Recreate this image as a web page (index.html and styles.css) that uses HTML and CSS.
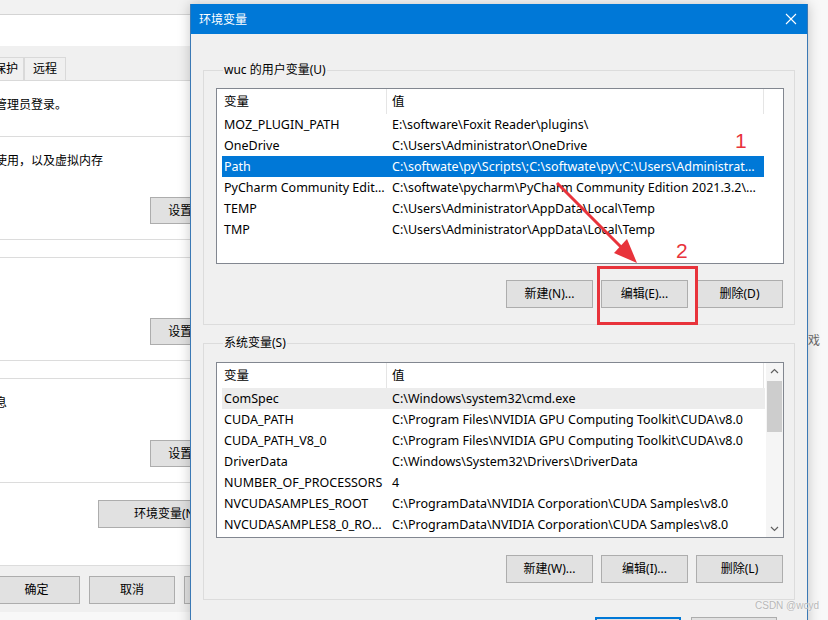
FILE: index.html
```html
<!DOCTYPE html>
<html lang="zh-CN">
<head>
<meta charset="utf-8">
<title>环境变量</title>
<link rel="stylesheet" href="styles.css">
</head>
<body>
<div class="desk">
  <div class="peek">戏</div>

  <section class="sysprop">
    <div class="sp-top"></div>
    <div class="sp-title"></div>
    <div class="sp-tabs">
      <span class="tab tab-cut">保护</span>
      <span class="tab">远程</span>
    </div>
    <div class="sp-panel">
      <p class="sp-note">管理员登录。</p>
      <div class="sp-group">
        <p class="sp-text">使用，以及虚拟内存</p>
        <div class="sp-row"><button class="btn sp-set">设置(S)...</button></div>
      </div>
      <div class="sp-group sp-group-tall">
        <div class="sp-row"><button class="btn sp-set">设置(E)...</button></div>
      </div>
      <div class="sp-group">
        <p class="sp-text">息</p>
        <div class="sp-row sp-row-low"><button class="btn sp-set">设置(T)...</button></div>
      </div>
      <div class="sp-row sp-row-env"><button class="btn sp-env">环境变量(N)...</button></div>
    </div>
    <div class="sp-foot">
      <button class="btn sp-ok">确定</button>
      <button class="btn sp-cancel">取消</button>
      <button class="btn sp-apply">应用(A)</button>
    </div>
  </section>

  <section class="dialog">
    <header class="dlg-title">
      <span class="dlg-caption">环境变量</span>
      <svg class="dlg-close" width="12" height="12" viewBox="0 0 12 12"><path d="M1 1L11 11M11 1L1 11" stroke="#fff" stroke-width="1.1" fill="none"/></svg>
    </header>
    <div class="dlg-body">
      <fieldset class="group group-user">
        <legend>wuc 的用户变量(U)</legend>
        <div class="list list-user">
          <div class="table">
            <div class="thead">
              <span class="th th-name">变量</span>
              <span class="th th-value">值</span>
            </div>
            <div class="tbody">
              <div class="tr"><span class="td">MOZ_PLUGIN_PATH</span><span class="td">E:\software\Foxit Reader\plugins\</span></div>
              <div class="tr"><span class="td">OneDrive</span><span class="td">C:\Users\Administrator\OneDrive</span></div>
              <div class="tr tr-sel"><span class="td">Path</span><span class="td">C:\softwate\py\Scripts\;C:\softwate\py\;C:\Users\Administrator\AppData\Local\Microsoft\WindowsApps;</span></div>
              <div class="tr"><span class="td">PyCharm Community Edition</span><span class="td">C:\softwate\pycharm\PyCharm Community Edition 2021.3.2\bin;</span></div>
              <div class="tr"><span class="td">TEMP</span><span class="td">C:\Users\Administrator\AppData\Local\Temp</span></div>
              <div class="tr"><span class="td">TMP</span><span class="td">C:\Users\Administrator\AppData\Local\Temp</span></div>
            </div>
          </div>
        </div>
        <div class="btn-row">
          <button class="btn">新建(N)...</button>
          <button class="btn">编辑(E)...</button>
          <button class="btn">删除(D)</button>
        </div>
      </fieldset>

      <fieldset class="group group-sys">
        <legend>系统变量(S)</legend>
        <div class="list list-sys">
          <div class="table">
            <div class="thead">
              <span class="th th-name">变量</span>
              <span class="th th-value">值</span>
            </div>
            <div class="tbody">
              <div class="tr tr-hover"><span class="td">ComSpec</span><span class="td">C:\Windows\system32\cmd.exe</span></div>
              <div class="tr"><span class="td">CUDA_PATH</span><span class="td">C:\Program Files\NVIDIA GPU Computing Toolkit\CUDA\v8.0</span></div>
              <div class="tr"><span class="td">CUDA_PATH_V8_0</span><span class="td">C:\Program Files\NVIDIA GPU Computing Toolkit\CUDA\v8.0</span></div>
              <div class="tr"><span class="td">DriverData</span><span class="td">C:\Windows\System32\Drivers\DriverData</span></div>
              <div class="tr"><span class="td">NUMBER_OF_PROCESSORS</span><span class="td">4</span></div>
              <div class="tr"><span class="td">NVCUDASAMPLES_ROOT</span><span class="td">C:\ProgramData\NVIDIA Corporation\CUDA Samples\v8.0</span></div>
              <div class="tr"><span class="td">NVCUDASAMPLES8_0_ROOT</span><span class="td">C:\ProgramData\NVIDIA Corporation\CUDA Samples\v8.0</span></div>
            </div>
          </div>
          <div class="scrollbar">
            <svg class="sb-arrow" width="17" height="17" viewBox="0 0 17 17"><path d="M5 10L8.5 6.5L12 10" stroke="#606060" stroke-width="1.2" fill="none"/></svg>
            <div class="sb-track"><div class="sb-thumb"></div></div>
            <svg class="sb-arrow" width="17" height="17" viewBox="0 0 17 17"><path d="M5 7L8.5 10.5L12 7" stroke="#606060" stroke-width="1.2" fill="none"/></svg>
          </div>
        </div>
        <div class="btn-row">
          <button class="btn">新建(W)...</button>
          <button class="btn">编辑(I)...</button>
          <button class="btn">删除(L)</button>
        </div>
      </fieldset>

      <div class="dlg-foot">
        <button class="btn btn-primary">确定</button>
        <button class="btn">取消</button>
      </div>
    </div>
  </section>

  <div class="mark mark-1">1</div>
  <div class="mark mark-2">2</div>
  <div class="mark-box"></div>
  <svg class="mark-arrow" width="828" height="620" viewBox="0 0 828 620">
    <line x1="557" y1="183" x2="625" y2="251" stroke="#e8333b" stroke-width="3"/>
    <polygon points="637,263 614,253 627,239" fill="#e8333b"/>
  </svg>
  <div class="watermark">CSDN @wcyd</div>
</div>
</body>
</html>
```

FILE: styles.css
```css
* { box-sizing: border-box; }

html, body {
  margin: 0;
  padding: 0;
  width: 828px;
  height: 620px;
  overflow: hidden;
  background: #f8f8f8;
  font-family: "Noto Sans", "Noto Sans CJK SC", sans-serif;
  font-size: 12px;
  color: #000;
}

.desk {
  position: relative;
  width: 828px;
  height: 620px;
  overflow: hidden;
}

p { margin: 0; }

.btn {
  font: inherit;
  font-size: 12px;
  color: #000;
  background: #e1e1e1;
  border: 1px solid #adadad;
  height: 28px;
  padding: 0;
  margin: 0;
  line-height: 26px;
}

/* ---------- background window (System Properties) ---------- */
.sysprop {
  position: absolute;
  left: 0;
  top: 0;
  width: 200px;
  height: 612px;
  overflow: hidden;
  background: #f0f0f0;
  display: flex;
  flex-direction: column;
}

.sp-top {
  height: 15px;
  background: #f2f2f2;
  border-bottom: 1px solid #d4d4d4;
}

.sp-title {
  height: 31px;
  background: #fff;
}

.sp-tabs {
  height: 34px;
  padding-top: 11px;
  display: flex;
  background: #f0f0f0;
}

.tab {
  height: 23px;
  line-height: 22px;
  padding: 0 8px;
  border: 1px solid #d9d9d9;
  border-bottom: none;
  background: #f0f0f0;
  white-space: nowrap;
}

.tab-cut {
  margin-left: -6px;
  padding-left: 0;
  border-left: none;
  padding-right: 5px;
}

.sp-panel {
  background: #fff;
  border-top: 1px solid #d9d9d9;
  border-bottom: 1px solid #dcdcdc;
  padding: 14px 0 37px;
}

.sp-note {
  line-height: 20px;
  margin-left: -5px;
  white-space: nowrap;
}

.sp-group {
  margin-top: 21px;
  border-top: 1px solid #dcdcdc;
  border-bottom: 1px solid #dcdcdc;
  padding: 14px 0 15px;
}

.sp-group + .sp-group { margin-top: 17px; }

.sp-group-tall { padding-top: 60px; }

.sp-text {
  line-height: 20px;
  margin-left: -5px;
  white-space: nowrap;
}

.sp-row {
  display: flex;
  margin-top: 26px;
  white-space: nowrap;
}

.sp-group-tall .sp-row { margin-top: 0; }
.sp-row-low { margin-top: 27px; }

.sp-set {
  margin-left: 150px;
  width: 84px;
  flex: none;
  height: 27px;
  line-height: 25px;
}

.sp-row-env { margin-top: 17px; }

.sp-env {
  margin-left: 98px;
  width: 130px;
  flex: none;
  height: 28px;
  text-align: left;
  padding-left: 35px;
}

.sp-foot {
  display: flex;
  gap: 9px;
  padding-top: 10px;
  white-space: nowrap;
}

.sp-ok { width: 87px; flex: none; margin-left: -7px; }
.sp-cancel { width: 86px; flex: none; }
.sp-apply { width: 86px; flex: none; }

/* ---------- dialog ---------- */
.dialog {
  position: absolute;
  left: 190px;
  top: 4px;
  width: 618px;
  height: 660px;
  background: #f0f0f0;
  border: 1px solid #3b79b5;
  border-top: none;
  box-shadow: 0 0 12px rgba(0, 0, 0, 0.22);
}

.dlg-title {
  height: 30px;
  background: #0078d7;
  color: #fff;
  display: flex;
  align-items: center;
  justify-content: space-between;
  padding: 1px 10px 0 8px;
}

.dlg-caption {
  font-size: 12px;
  line-height: 29px;
}

.dlg-close { display: block; margin-top: -1px; }

.dlg-body {
  padding: 28px 12px 0 12px;
}

.group {
  margin: 0;
  border: 1px solid #dcdcdc;
  width: 592px;
  padding: 10px 10px 16px 12px;
  min-width: 0;
}

.group legend {
  margin-left: 7px;
  padding: 0 1px;
  line-height: 16px;
  font-size: 12px;
  color: #000;
}

.group-sys {
  margin-top: 10px;
  padding-top: 11px;
}

.list {
  width: 568px;
  height: 176px;
  background: #fff;
  border: 1px solid #828790;
  display: flex;
  overflow: hidden;
  font-size: 12.5px;
}

.table {
  flex: 1;
  min-width: 0;
}

.thead {
  height: 25px;
  display: flex;
  line-height: 25px;
}

.th {
  border-right: 1px solid #e5e5e5;
  height: 25px;
}

.th-name {
  width: 170px;
  padding-left: 7px;
}

.th-value {
  width: 377px;
  padding-left: 5px;
}

.tbody {
  padding-left: 5px;
}

.tr {
  display: grid;
  grid-template-columns: 164px 378px;
  height: 21px;
  line-height: 21px;
  width: 542px;
}

.td {
  white-space: nowrap;
  overflow: hidden;
  text-overflow: ellipsis;
}

.td:first-child { padding: 0 0 0 2px; }
.td:last-child { padding: 0 2px 0 6px; }

.tr-sel {
  background: #0078d7;
  color: #fff;
}

.tr-hover {
  background: #ececec;
}

.list-sys .tr { width: 543px; }

.scrollbar {
  width: 17px;
  flex: none;
  background: #f5f5f5;
  display: flex;
  flex-direction: column;
}

.sb-arrow { display: block; flex: none; }

.sb-track {
  flex: 1;
  padding: 1px 1px 0 1px;
}

.sb-thumb {
  height: 51px;
  background: #cdcdcd;
}

.btn-row {
  display: flex;
  justify-content: flex-end;
  gap: 8px;
  margin-top: 16px;
  padding-right: 1px;
}

.group-sys .btn-row { margin-top: 17px; }

.btn-row .btn { width: 87px; }

.dlg-foot {
  display: flex;
  justify-content: flex-end;
  gap: 10px;
  margin-top: 17px;
  padding-right: 18px;
}

.dlg-foot .btn { width: 86px; height: 28px; }

.btn-primary {
  border: 2px solid #0078d7;
}

/* ---------- annotations & overlays ---------- */
.peek {
  position: absolute;
  left: 808px;
  top: 332px;
  color: #6a6a6a;
  font-size: 12px;
  line-height: 18px;
}

.mark {
  position: absolute;
  color: #e8333b;
  font-family: "Liberation Sans", sans-serif;
  font-size: 21px;
  line-height: 22px;
}

.mark-1 { left: 735px; top: 130px; }
.mark-2 { left: 676px; top: 240px; }

.mark-box {
  position: absolute;
  left: 597px;
  top: 266px;
  width: 101px;
  height: 59px;
  border: 3px solid #e8333b;
}

.mark-arrow {
  position: absolute;
  left: 0;
  top: 0;
  pointer-events: none;
}

.watermark {
  position: absolute;
  left: 755px;
  top: 599px;
  color: #b8b8b8;
  font-family: "Liberation Sans", sans-serif;
  font-size: 10px;
  line-height: 14px;
  text-shadow: 0 0 2px #fff;
}
```
